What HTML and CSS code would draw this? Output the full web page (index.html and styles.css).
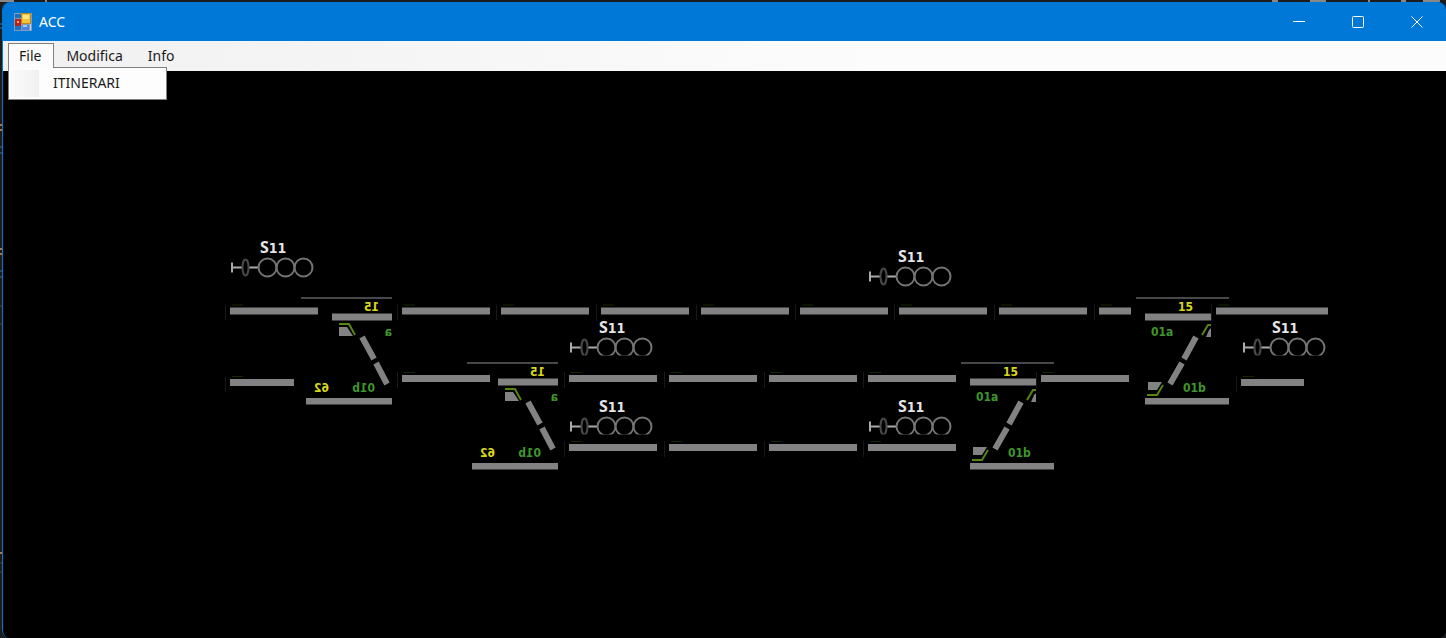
FILE: index.html
```html
<!DOCTYPE html>
<html lang="it">
<head>
<meta charset="utf-8">
<title>ACC</title>
<link rel="stylesheet" href="styles.css">
</head>
<body>
<svg class="desktop" aria-hidden="true">
  <path d="M0 1H14M46 0V2M1272 1H1278M1310 1H1326M1368 1H1370M1401 1H1406M1423 1H1440" stroke="#888" stroke-width="2"/>
  <path d="M0 125H2M0 130H2M0 249H2M0 254H2M0 553H2" stroke="#a07a48" stroke-width="2"/>
  <path d="M0 24H2M0 28H2M0 147H2M0 153H2M0 271H2M0 277H2" stroke="#2f75b5" stroke-width="1"/>
  <path d="M0 306H2M0 324H2M0 563H2M0 572H2" stroke="#484848"/>
</svg>
<div class="window">
  <header class="titlebar">
    <svg class="app-icon" viewBox="0 0 18 18" aria-hidden="true">
      <rect width="18" height="18" fill="#7f9dbb"/>
      <rect x="1" y="1" width="6" height="4" fill="#1f6fc0"/>
      <rect x="1" y="13" width="6" height="4" fill="#1f6fc0"/>
      <rect x="7" y="0" width="10" height="11" fill="#b98a22"/>
      <rect x="8" y="1" width="8" height="9" fill="#f4c233"/>
      <rect x="9" y="2" width="6" height="4" fill="#ffe486"/>
      <rect x="1" y="6" width="6" height="7" fill="#b3221b"/>
      <rect x="3" y="8" width="2" height="2" fill="#f09a8c"/>
      <rect x="8" y="12" width="7" height="5" fill="#4a84e8"/>
      <rect x="9" y="12" width="4" height="2" fill="#a9caff"/>
      <rect x="16" y="11" width="1" height="6" fill="#c9d6e2"/>
    </svg>
    <h1 class="title">ACC</h1>
    <div class="controls">
      <button class="control" aria-label="Riduci a icona"><svg viewBox="0 0 12 12"><path d="M0 5.5H12"/></svg></button>
      <button class="control" aria-label="Ingrandisci"><svg viewBox="0 0 12 12"><rect x=".5" y=".5" width="11" height="11" rx="1"/></svg></button>
      <button class="control" aria-label="Chiudi"><svg viewBox="0 0 12 12"><path d="M.5 .5L11.5 11.5M11.5 .5L.5 11.5"/></svg></button>
    </div>
  </header>
  <nav class="menubar">
    <div class="menu">
      <button class="menu-item open" aria-haspopup="true" aria-expanded="true">File</button>
      <div class="dropdown"><button class="dropdown-item">ITINERARI</button></div>
    </div>
    <button class="menu-item">Modifica</button>
    <button class="menu-item">Info</button>
  </nav>
  <main class="board">
    <svg class="diagram" viewBox="3 71 1443 567" preserveAspectRatio="xMinYMin meet" role="img" aria-label="Quadro di stazione">
      <defs>
        <g id="joint">
          <path class="joint" d="M-4.5 -3V13"/>
          <path class="hint" d="M2 -2.5H13"/>
        </g>
        <g id="track"><use href="#joint"/><rect class="rail" width="88" height="7"/></g>
        <clipPath id="lamp-area"><rect x="0" y="-30" width="90" height="38"/></clipPath>
        <g id="signal">
          <path class="mast" d="M2 -5V5M1 0H12M19 0H28"/>
          <ellipse class="disc" cx="15.5" cy="0" rx="3" ry="8"/>
          <circle class="lamp" cx="37.5" cy="0" r="9"/>
          <circle class="lamp" cx="55.5" cy="0" r="9"/>
          <circle class="lamp" cx="73.5" cy="0" r="9"/>
          <text class="name" x="30" y="-15">S<tspan class="digits">11</tspan></text>
        </g>
        <g id="switch-left">
          <path class="edge" d="M0 0H91"/>
          <path class="rail" d="M31 15.500H91V22.500H31ZM5 100H91V106.500H5Z"/>
          <path class="rail" d="M38 29H46L52 38H38Z"/>
          <path class="route" d="M38 26H48L54 37"/>
          <path class="blade" d="M61 39L73 61M75 65L86 86"/>
          <g transform="scale(-1 1)">
            <text class="yellow" x="-78" y="13">15</text>
            <text class="green" x="-91" y="38">a</text>
            <text class="yellow" x="-28" y="94">62</text>
            <text class="green" x="-74" y="94">01b</text>
          </g>
        </g>
        <g id="switch-right">
          <path class="edge" d="M0 0H93"/>
          <path class="rail" d="M9 15.500H75V22.500H9ZM9 100H93V106.500H9Z"/>
          <path class="rail" d="M75 30V39H70L73 32ZM12 84H26L21 92H12Z"/>
          <path class="route" d="M66 37L72 27H75M11 97H21L27 87"/>
          <path class="blade" d="M60 39L48 61M46 65L34 86"/>
          <text class="yellow" x="42" y="13">15</text>
          <text class="green" x="15" y="38">01a</text>
          <text class="green" x="47" y="94">01b</text>
        </g>
      </defs>

      <use href="#track" x="230" y="307.500"/>
      <use href="#track" x="402" y="307.500"/>
      <use href="#track" x="501" y="307.500"/>
      <use href="#track" x="601" y="307.500"/>
      <use href="#track" x="701" y="307.500"/>
      <use href="#track" x="800" y="307.500"/>
      <use href="#track" x="899" y="307.500"/>
      <use href="#track" x="999" y="307.500"/>
      <use href="#joint" x="1099" y="307.500"/><rect class="rail" x="1099" y="307.500" width="32" height="7"/>
      <use href="#joint" x="1216" y="307.500"/><rect class="rail" x="1216" y="307.500" width="112" height="7"/>

      <use href="#joint" x="230" y="379"/><rect class="rail" x="230" y="379" width="64" height="7"/>
      <use href="#track" x="402" y="375"/>
      <use href="#track" x="569" y="375"/>
      <use href="#track" x="669" y="375"/>
      <use href="#track" x="769" y="375"/>
      <use href="#track" x="868" y="375"/>
      <use href="#track" x="1041" y="375"/>
      <use href="#joint" x="1241" y="379"/><rect class="rail" x="1241" y="379" width="63" height="7"/>

      <use href="#track" x="569" y="444"/>
      <use href="#track" x="669" y="444"/>
      <use href="#track" x="769" y="444"/>
      <use href="#track" x="868" y="444"/>

      <use href="#switch-left" x="301" y="298"/>
      <use href="#switch-left" x="467" y="363"/>
      <use href="#switch-right" x="961" y="363"/>
      <use href="#switch-right" x="1136" y="298"/>

      <use href="#signal" x="230" y="267.500"/>
      <use href="#signal" x="868" y="276.500"/>
      <g transform="translate(569 347.5)"><use href="#signal" clip-path="url(#lamp-area)"/></g>
      <g transform="translate(569 426.5)"><use href="#signal" clip-path="url(#lamp-area)"/></g>
      <g transform="translate(868 426.5)"><use href="#signal" clip-path="url(#lamp-area)"/></g>
      <g transform="translate(1242 347.5)"><use href="#signal" clip-path="url(#lamp-area)"/></g>
    </svg>
  </main>
</div>
</body>
</html>
```
FILE: styles.css
```css
* { box-sizing: border-box; }
body {
  margin: 0;
  height: 100vh;
  padding: 2px 0 0 2px;
  background: #1b1c1e;
  font-family: "Noto Sans", "Open Sans", sans-serif;
  overflow: hidden;
}
button { font: inherit; border: 0; background: none; padding: 0; }
.desktop { position: absolute; top: 0; left: 0; width: 100%; height: 100%; }
.window {
  position: relative;
  display: flex;
  flex-direction: column;
  height: 100%;
  border-left: 1px solid #0078d7;
  border-radius: 8px;
  background: #000;
  overflow: hidden;
}
.titlebar {
  display: flex;
  align-items: center;
  flex: none;
  height: 39px;
  padding-left: 11px;
  background: #0078d7;
  color: #fff;
}
.app-icon { width: 18px; height: 18px; }
.title { margin: 0 0 0 7px; font-size: 14px; font-weight: 400; line-height: 20px; }
.controls { display: flex; margin-left: auto; }
.control { display: grid; place-items: center; width: 59px; height: 39px; }
.control svg { width: 12px; height: 12px; fill: none; stroke: #fff; stroke-width: 1; }
.menubar {
  display: flex;
  flex: none;
  height: 30px;
  padding: 2px 0 0 5px;
  background: linear-gradient(90deg, #f0f0f0, #fcfcfc 60%);
  color: #1a1a1a;
  font-size: 14px;
}
.menu { position: relative; }
.menu-item { height: 25px; padding: 0 13px 0 12px; line-height: 25px; color: inherit; }
.menu-item.open {
  position: relative;
  z-index: 2;
  padding: 0 12px 0 10px;
  border: 1px solid #808080;
  border-bottom: 0;
  background: #fcfcfc;
  line-height: 22px;
}
.menu-item.open ~ .menu-item { padding-left: 11px; }
.dropdown {
  position: absolute;
  z-index: 1;
  top: 24px;
  left: 0;
  width: 159px;
  padding: 2px;
  border: 1px solid #808080;
  background: #fdfdfd;
}
.dropdown-item {
  display: block;
  width: 100%;
  height: 27px;
  padding: 0 0 2px 42px;
  background: linear-gradient(90deg, #fafafa, #f0f0f0) left / 28px 100% no-repeat;
  color: #1a1a1a;
  text-align: left;
}
.board { flex: 1; min-height: 0; background: #000; }
.diagram { display: block; width: 100%; height: 100%; }
.rail { fill: #828282; }
.joint { fill: none; stroke: #181818; }
.hint { fill: none; stroke: #142800; }
.edge { fill: none; stroke: #484848; stroke-width: 2; }
.route { fill: none; stroke: #568610; stroke-width: 2; }
.blade { fill: none; stroke: #828282; stroke-width: 6; }
.mast { fill: none; stroke: #aaa; stroke-width: 2; }
.disc { fill: none; stroke: #484848; stroke-width: 2; }
.lamp { fill: none; stroke: #747474; stroke-width: 2; }
.name, .yellow, .green { font-weight: 700; }
.name { font-family: "Noto Sans", sans-serif; font-size: 16px; fill: #e4e4e4; }
.digits, .yellow, .green { font-family: "DejaVu Sans Condensed", "DejaVu Sans", sans-serif; }
.digits { font-size: 14px; }
.yellow { font-size: 12px; fill: #d8d818; }
.green { font-size: 12px; fill: #3f962b; }
```
